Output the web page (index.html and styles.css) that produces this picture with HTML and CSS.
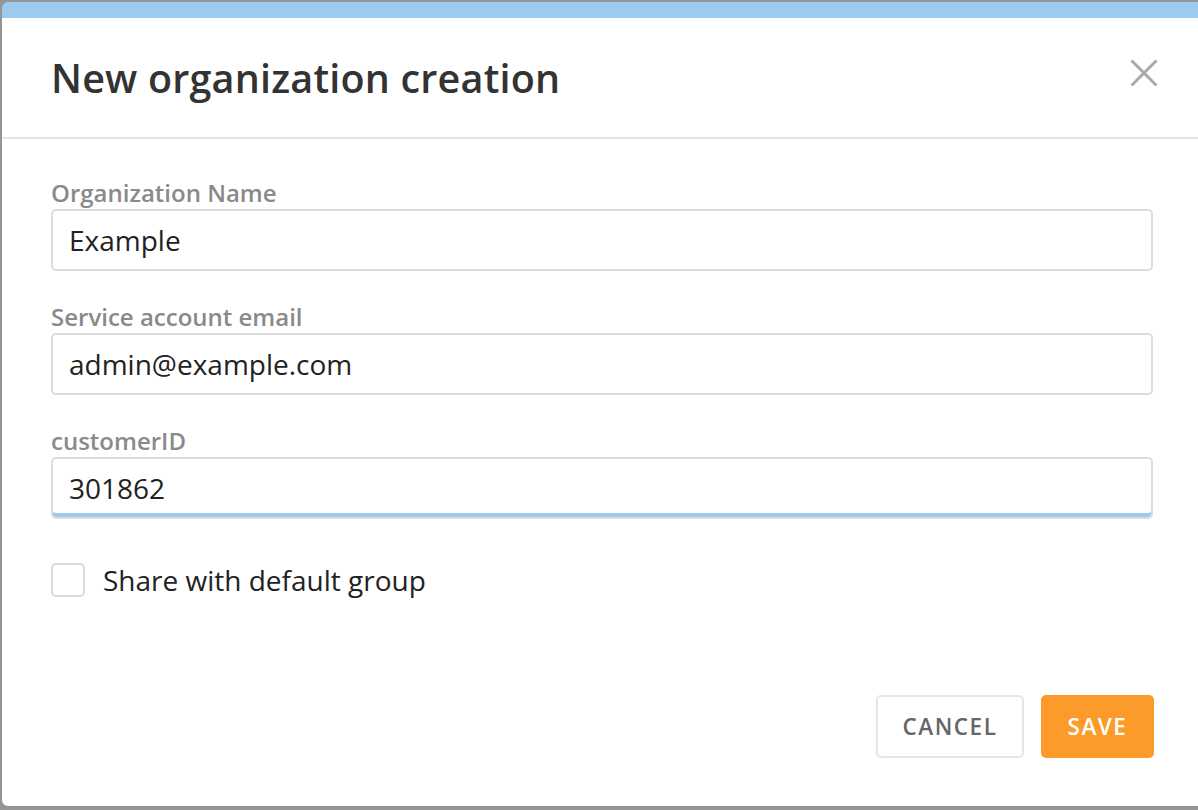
FILE: index.html
```html
<!DOCTYPE html>
<html lang="en">
<head>
<meta charset="utf-8">
<title>New organization creation</title>
<link rel="stylesheet" href="styles.css">
</head>
<body>
<div class="dialog">
  <div class="dialog-header">
    <h1 class="dialog-title">New organization creation</h1>
    <button class="close-btn" aria-label="Close">
      <svg width="28" height="28" viewBox="0 0 28 28"><path d="M1.5 1.5 L26.5 26.5 M26.5 1.5 L1.5 26.5" stroke="#aaaaaa" stroke-width="3" fill="none"/></svg>
    </button>
  </div>
  <div class="dialog-body">
    <div class="field">
      <label class="field-label">Organization Name</label>
      <div class="input">Example</div>
    </div>
    <div class="field">
      <label class="field-label">Service account email</label>
      <div class="input">admin@example.com</div>
    </div>
    <div class="field">
      <label class="field-label">customerID</label>
      <div class="input input-focused">301862</div>
    </div>
    <div class="check-row">
      <span class="checkbox"></span>
      <span class="check-label">Share with default group</span>
    </div>
  </div>
  <div class="dialog-footer">
    <button class="btn btn-cancel">CANCEL</button>
    <button class="btn btn-save">SAVE</button>
  </div>
</div>
</body>
</html>
```

FILE: styles.css
```css
html, body {
  margin: 0;
  padding: 0;
  height: 100%;
}
body {
  background: #959595;
  font-family: "Open Sans", "Liberation Sans", sans-serif;
  overflow: hidden;
}
.dialog {
  margin: 2px 0 0 2px;
  height: 804px;
  background: #ffffff;
  border-top: 16px solid #9bcbef;
  border-radius: 6px 0 0 6px;
  box-sizing: border-box;
  display: flex;
  flex-direction: column;
}
.dialog-header {
  height: 121px;
  box-sizing: border-box;
  border-bottom: 2px solid #e3e3e3;
  display: flex;
  align-items: center;
  justify-content: space-between;
  padding: 0 40px 0 49px;
}
.dialog-title {
  margin: 0;
  font-size: 39.5px;
  font-weight: 600;
  color: #333333;
  letter-spacing: 0.2px;
}
.close-btn {
  align-self: flex-start;
  margin-top: 41px;
  border: 0;
  background: none;
  padding: 0;
  width: 28px;
  height: 28px;
  cursor: pointer;
}
.close-btn svg { display: block; }
.dialog-body {
  flex: 1;
  padding: 40px 45px 0 49px;
  display: flex;
  flex-direction: column;
}
.field {
  display: flex;
  flex-direction: column;
  margin-bottom: 32px;
}
.field-label {
  font-size: 24px;
  line-height: 28px;
  font-weight: 600;
  color: #8a8a8a;
  margin-bottom: 2px;
}
.input {
  height: 62px;
  box-sizing: border-box;
  border: 2px solid #dddddd;
  border-radius: 5px;
  padding: 0 16px;
  display: flex;
  align-items: center;
  font-size: 28px;
  color: #222222;
}
.input-focused {
  box-shadow: inset 0 -4px 0 #9bcbef;
}
.check-row {
  display: flex;
  align-items: center;
  margin-top: 10px;
}
.checkbox {
  width: 34px;
  height: 34px;
  box-sizing: border-box;
  border: 2px solid #dcdcdc;
  border-radius: 5px;
  margin-right: 18px;
}
.check-label {
  font-size: 28px;
  color: #222222;
}
.dialog-footer {
  display: flex;
  justify-content: flex-end;
  gap: 17px;
  padding: 0 44px 48px 0;
}
.btn {
  height: 63px;
  box-sizing: border-box;
  border-radius: 5px;
  font-family: "Open Sans", "Liberation Sans", sans-serif;
  font-size: 22.5px;
  font-weight: 600;
  letter-spacing: 1.5px;
  cursor: pointer;
}
.btn-cancel {
  width: 148px;
  background: #ffffff;
  border: 2px solid #e6e6e6;
  color: #666666;
}
.btn-save {
  width: 113px;
  background: #fd9b2a;
  border: 0;
  color: #ffffff;
}
```
